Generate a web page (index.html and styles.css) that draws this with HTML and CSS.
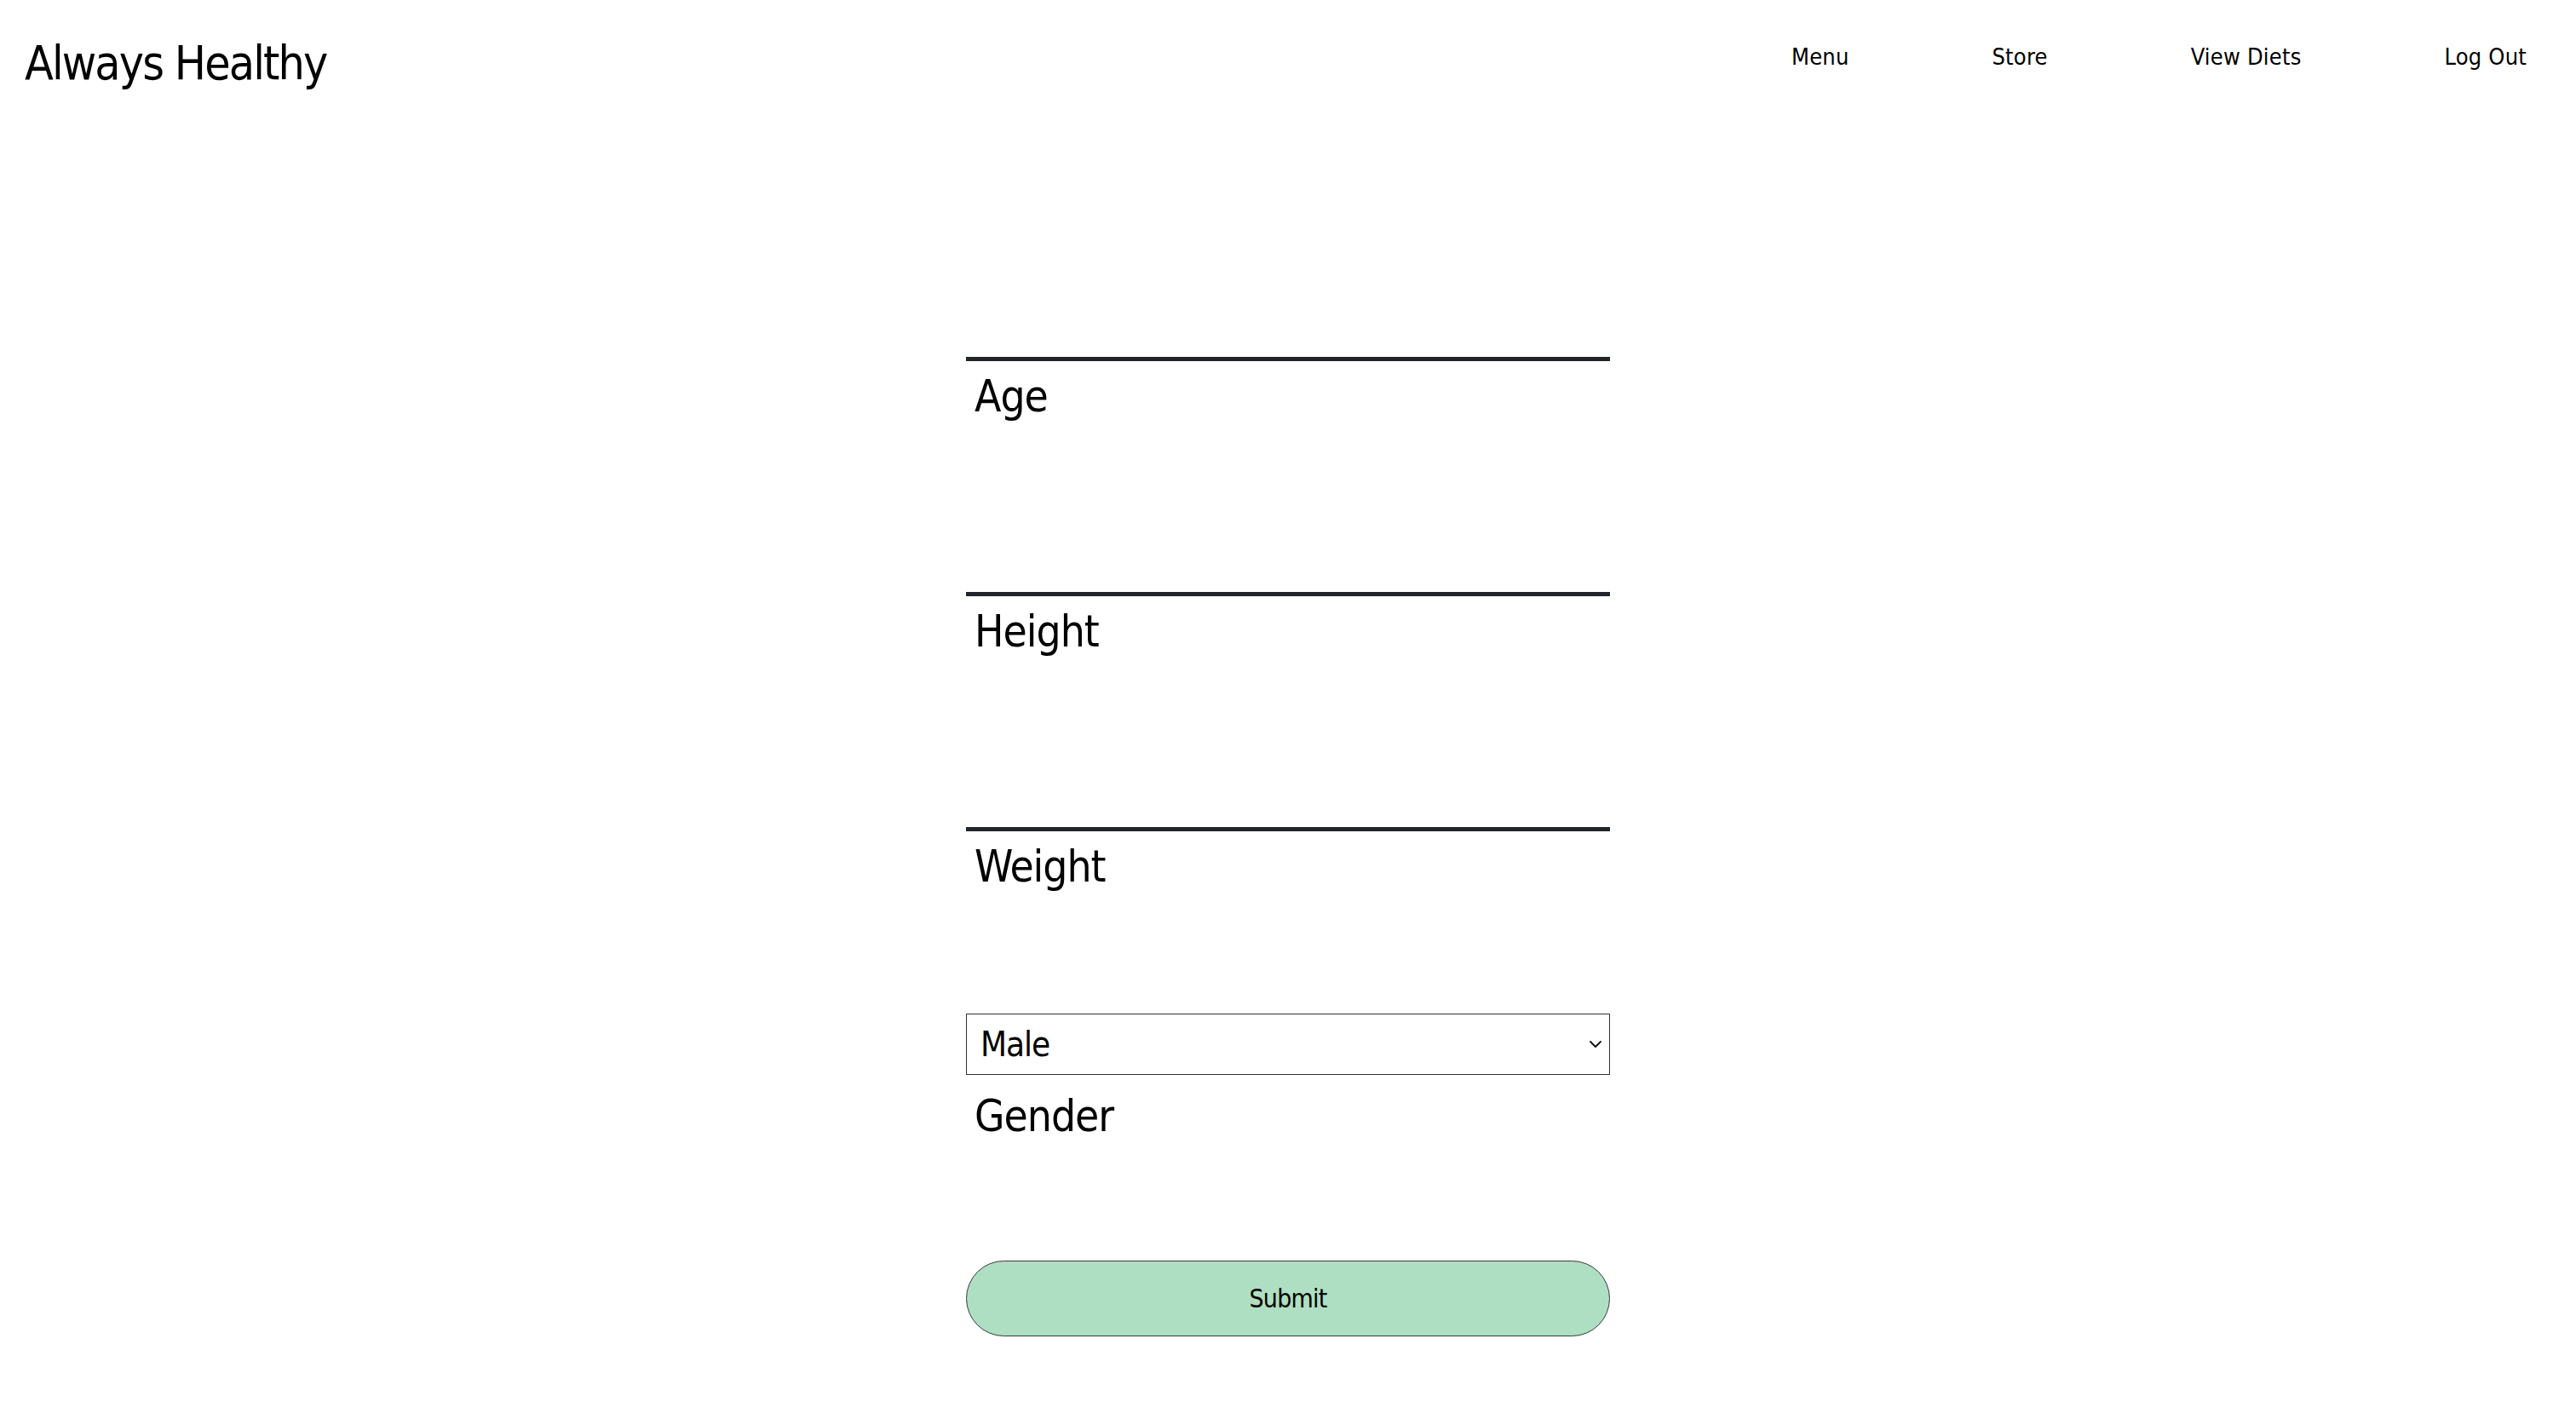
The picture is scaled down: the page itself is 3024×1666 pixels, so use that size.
FILE: index.html
```html
<!DOCTYPE html>
<html lang="en">
<head>
<meta charset="utf-8">
<title>Always Healthy</title>
<link rel="stylesheet" href="styles.css">
</head>
<body>
<header class="topbar">
  <div class="brand">Always Healthy</div>
  <nav class="nav">
    <a href="#" class="nav-link">Menu</a>
    <a href="#" class="nav-link">Store</a>
    <a href="#" class="nav-link">View Diets</a>
    <a href="#" class="nav-link">Log Out</a>
  </nav>
</header>
<main class="main">
  <form class="form">
    <div class="field">
      <input class="field-input" type="text" id="age">
      <label class="field-label" for="age">Age</label>
    </div>
    <div class="field">
      <input class="field-input" type="text" id="height">
      <label class="field-label" for="height">Height</label>
    </div>
    <div class="field">
      <input class="field-input" type="text" id="weight">
      <label class="field-label" for="weight">Weight</label>
    </div>
    <div class="field field-select">
      <div class="select-wrap">
        <select class="select" id="gender">
          <option>Male</option>
          <option>Female</option>
        </select>
        <svg class="chevron" width="14" height="8" viewBox="0 0 14 8" aria-hidden="true">
          <path d="M1 1 L7 7 L13 1" fill="none" stroke="#111" stroke-width="1.8" stroke-linecap="round" stroke-linejoin="round"/>
        </svg>
      </div>
      <label class="field-label label-gender" for="gender">Gender</label>
    </div>
    <button type="button" class="submit">Submit</button>
  </form>
</main>
</body>
</html>
```
FILE: styles.css
```css
html, body {
  margin: 0;
  padding: 0;
  background: #ffffff;
}

body {
  font-family: "DejaVu Sans Condensed", "DejaVu Sans", sans-serif;
  color: #000000;
}

.topbar {
  display: flex;
  justify-content: space-between;
  align-items: flex-start;
  padding: 39px 58px 0 29px;
}

.brand {
  font-size: 55px;
  line-height: 1.2;
  letter-spacing: -1.9px;
  margin-top: 2px;
}

.nav {
  display: flex;
  gap: 168px;
  margin-top: 12px;
}

.nav-link {
  font-size: 27px;
  line-height: 1.2;
  letter-spacing: 0.2px;
  color: #000000;
  text-decoration: none;
}

.main {
  display: flex;
  justify-content: center;
}

.form {
  width: 756px;
  display: flex;
  flex-direction: column;
  margin-top: 252px;
}

.field {
  display: flex;
  flex-direction: column;
  margin-bottom: 137px;
}

.field-input {
  box-sizing: border-box;
  height: 65px;
  border: none;
  border-bottom: 5px solid #212529;
  background: transparent;
  outline: none;
  padding: 0 12px;
  font-family: inherit;
  font-size: 40px;
}

.field-label {
  display: block;
  margin-top: 10px;
  padding-left: 10px;
  font-size: 51px;
  line-height: 64px;
  letter-spacing: -1px;
}

.field-select {
  margin-top: 3px;
  margin-bottom: 137px;
}

.select-wrap {
  position: relative;
}

.select {
  box-sizing: border-box;
  display: block;
  height: 72px;
  width: 100%;
  border: 1px solid #333333;
  border-radius: 0;
  background-color: #ffffff;
  appearance: none;
  -webkit-appearance: none;
  padding: 0 40px 0 16px;
  font-family: inherit;
  font-size: 40px;
  letter-spacing: -1px;
  color: #000000;
}

.chevron {
  position: absolute;
  right: 10px;
  top: 32px;
  pointer-events: none;
}

.label-gender {
  margin-top: 17px;
}

.submit {
  box-sizing: border-box;
  height: 89px;
  width: 100%;
  border: 1px solid #3a3a3a;
  border-radius: 45px;
  background: #aedfc2;
  font-family: inherit;
  font-size: 30px;
  letter-spacing: -0.8px;
  color: #000000;
  cursor: pointer;
}
```
